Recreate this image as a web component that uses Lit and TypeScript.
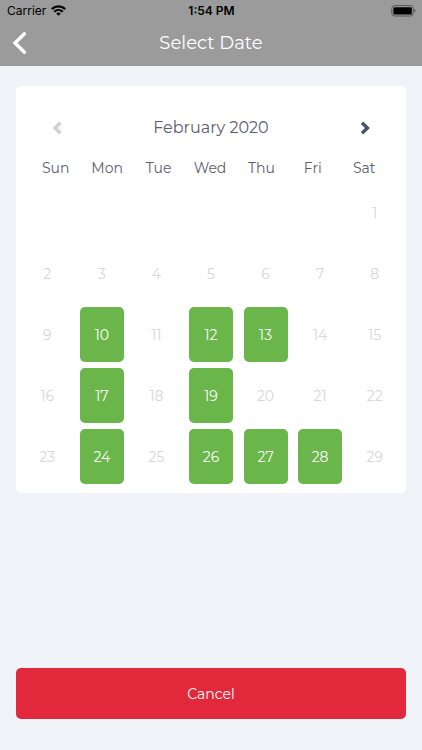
import { LitElement, html, css, nothing } from "lit";
import { customElement, property, state } from "lit/decorators.js";

const WEEKDAYS = ["Sun", "Mon", "Tue", "Wed", "Thu", "Fri", "Sat"];

@customElement("status-bar")
class StatusBar extends LitElement {
  static styles = css`
    :host {
      display: grid;
      grid-template-columns: 1fr auto 1fr;
      align-items: center;
      height: 22px;
      padding: 0 6px 0 7px;
      color: #000;
      font: 400 12px/16px Inter, sans-serif;
    }
    .carrier {
      display: flex;
      align-items: center;
      gap: 5px;
    }
    .time {
      font-weight: 600;
    }
    .battery {
      justify-self: end;
    }
    svg {
      display: block;
    }
  `;
  render() {
    return html`
      <span class="carrier">
        Carrier
        <svg width="15" height="12" viewBox="0 0 15 12" aria-label="Wi-Fi">
          <path d="M.8 4.1C4.6 .4 10.4 .4 14.2 4.1" fill="none" stroke="#000" stroke-width="2.3" />
          <path d="M3.2 6.7C5.7 4.4 9.3 4.4 11.8 6.7" fill="none" stroke="#000" stroke-width="2.1" />
          <path d="M5.2 8.4C6.6 7.2 8.4 7.2 9.8 8.4L7.5 10.8Z" />
        </svg>
      </span>
      <span class="time">1:54 PM</span>
      <svg class="battery" width="25" height="12" viewBox="0 0 25 12" aria-label="Battery full">
        <rect x=".8" y=".6" width="21.4" height="10.4" rx="2.8" fill="none" stroke="#555" stroke-width="1" />
        <rect x="2.4" y="2.2" width="18.4" height="7.2" rx="1.2" />
        <path d="M23.4 4.1C25 4.7 25 6.9 23.4 7.5Z" fill="#555" />
      </svg>
    `;
  }
}

@customElement("month-calendar")
class MonthCalendar extends LitElement {
  @property({ type: Number }) year = 2020;
  @property({ type: Number }) month = 1;
  @property({ attribute: false }) available: number[] = [];

  static styles = css`
    :host {
      display: block;
      padding: 22px 4px 6px;
      border-radius: 5px;
      background: #fff;
      color: #5b5e6d;
    }
    .bar {
      display: flex;
      align-items: center;
      justify-content: space-between;
      height: 40px;
      padding: 0 22px;
    }
    h2 {
      margin: 0;
      font-weight: 400;
      font-size: 16px;
      line-height: 24px;
    }
    button {
      display: flex;
      align-items: center;
      justify-content: center;
      padding: 0;
      border: 0;
      background: none;
      color: inherit;
      font: inherit;
    }
    .arrow {
      width: 30px;
      height: 32px;
      color: #4c5064;
    }
    .arrow:disabled {
      color: #d0d0d0;
    }
    table,
    thead,
    tbody {
      display: block;
    }
    tr {
      display: grid;
      grid-template-columns: repeat(7, 1fr);
    }
    thead {
      padding: 10px 12px 4px 10px;
    }
    th {
      padding: 0;
      font-weight: 400;
      font-size: 14px;
      line-height: 20px;
      text-align: center;
    }
    td {
      display: flex;
      justify-content: center;
      padding: 3px 0;
    }
    .day {
      width: 44px;
      height: 55px;
      border-radius: 5px;
      background: #6ab64a;
      color: #fff;
      font-size: 14px;
    }
    .day:disabled {
      background: none;
      color: #d6d6d6;
    }
  `;

  private get weeks(): number[][] {
    const lead = new Date(this.year, this.month, 1).getDay();
    const count = new Date(this.year, this.month + 1, 0).getDate();
    const rows = Math.ceil((lead + count) / 7);
    return Array.from({ length: rows }, (_, r) =>
      Array.from({ length: 7 }, (_, c) => {
        const day = r * 7 + c - lead + 1;
        return day > 0 && day <= count ? day : 0;
      })
    );
  }

  render() {
    const name = new Date(this.year, this.month, 1).toLocaleString("en-US", { month: "long" });
    return html`
      <div class="bar">
        <button class="arrow" aria-label="Previous month" disabled>
          <svg width="12" height="14" viewBox="0 0 12 14" fill="none" stroke="currentColor" stroke-width="3.4">
            <path d="M9.4 1.8L4 7L9.4 12.2" />
          </svg>
        </button>
        <h2>${name} ${this.year}</h2>
        <button class="arrow" aria-label="Next month">
          <svg width="12" height="14" viewBox="0 0 12 14" fill="none" stroke="currentColor" stroke-width="3.4">
            <path d="M3 1.8L8.4 7L3 12.2" />
          </svg>
        </button>
      </div>
      <table>
        <thead>
          <tr>
            ${WEEKDAYS.map((d) => html`<th scope="col">${d}</th>`)}
          </tr>
        </thead>
        <tbody>
          ${this.weeks.map(
            (week) => html`<tr>
              ${week.map(
                (day) => html`<td>
                  ${day
                    ? html`<button class="day" ?disabled=${!this.available.includes(day)}>${day}</button>`
                    : nothing}
                </td>`
              )}
            </tr>`
          )}
        </tbody>
      </table>
    `;
  }
}

@customElement("app-root")
class AppRoot extends LitElement {
  @state() private available = [10, 12, 13, 17, 19, 24, 26, 27, 28];

  static styles = css`
    :host {
      display: flex;
      flex-direction: column;
      min-height: 100vh;
      background: #f0f4f8;
      font-family: Montserrat, Inter, sans-serif;
    }
    header {
      background: #9b9b9b;
      color: #fff;
    }
    .nav {
      display: grid;
      grid-template-columns: 40px 1fr 40px;
      align-items: center;
      height: 42px;
      padding-bottom: 2px;
    }
    h1 {
      margin: 0;
      font-weight: 400;
      font-size: 18px;
      line-height: 24px;
      text-align: center;
    }
    button {
      display: block;
      padding: 0;
      border: 0;
      background: none;
      color: #fff;
      font: inherit;
    }
    .back {
      display: flex;
      align-items: center;
      justify-content: center;
      height: 42px;
    }
    main {
      display: flex;
      flex: 1;
      flex-direction: column;
      justify-content: space-between;
      gap: 20px;
      padding: 20px 16px 31px;
    }
    .cancel {
      height: 51px;
      border-radius: 5px;
      background: #e2293c;
      font-size: 14px;
    }
  `;

  render() {
    return html`
      <header>
        <status-bar></status-bar>
        <div class="nav">
          <button class="back" aria-label="Back">
            <svg width="16" height="24" viewBox="0 0 16 24" fill="none" stroke="currentColor" stroke-width="3.4">
              <path d="M12.4 2.8L3 12L12.4 21.2" stroke-linecap="round" />
            </svg>
          </button>
          <h1>Select Date</h1>
        </div>
      </header>
      <main>
        <month-calendar .year=${2020} .month=${1} .available=${this.available}></month-calendar>
        <button class="cancel">Cancel</button>
      </main>
    `;
  }
}
